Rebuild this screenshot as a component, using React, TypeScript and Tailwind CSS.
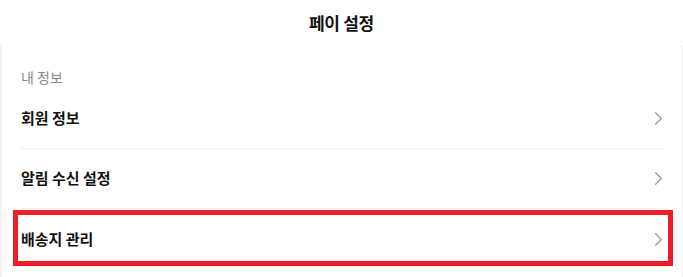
import React from "react";
import { ChevronRight } from "lucide-react";

const ITEMS = ["회원 정보", "알림 수신 설정", "배송지 관리"];

const font = { fontFamily: '"Noto Sans CJK KR", "Noto Sans", sans-serif' };

export default function App() {
  return (
    <div className="w-[683px] h-[277px] bg-[#f2f2f2] overflow-hidden" style={font}>
      <header className="h-[45px] bg-white flex items-center justify-center">
        <h1 className="text-[17px] font-bold text-[#111] tracking-[-0.3px]">페이 설정</h1>
      </header>
      <section className="relative ml-[2px] mr-[1px] bg-white h-[232px] px-[19px] pt-[22px]">
        <p className="text-[14px] text-[#888] leading-[20px] mb-[2px]">내 정보</p>
        <ul>
          {ITEMS.map((item, i) => (
            <li
              key={item}
              className={`h-[60px] flex items-center justify-between ${
                i !== ITEMS.length - 1 ? "border-b border-[#f0f0f0]" : ""
              }`}
            >
              <span className="text-[15px] font-bold text-[#111]">{item}</span>
              <ChevronRight size={23} strokeWidth={1.3} className="text-[#999] -mr-[7px]" />
            </li>
          ))}
        </ul>
        {/* 강조 표시 박스 */}
        <div className="absolute left-[11px] top-[165px] w-[660px] h-[56px] border-[5px] border-[#ee1c25] pointer-events-none" />
      </section>
    </div>
  );
}
